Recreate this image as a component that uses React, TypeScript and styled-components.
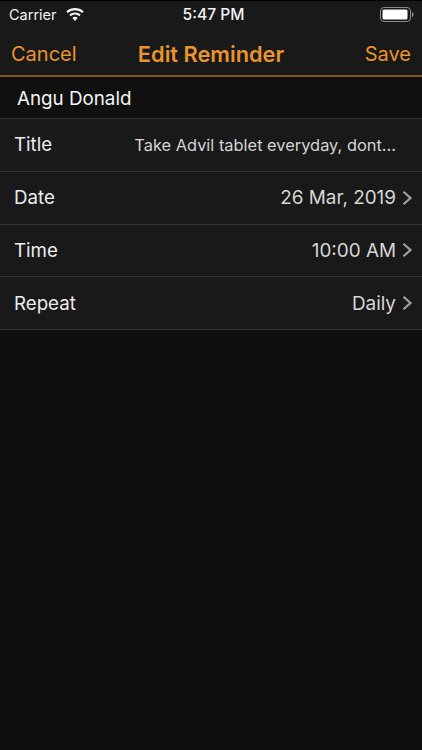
import React from 'react'
import styled, { createGlobalStyle } from 'styled-components'

const GlobalStyle = createGlobalStyle`
    html, body {
        margin: 0;
        padding: 0;
        background: #0f0f0f;
    }
    * {
        box-sizing: border-box;
    }
`

const Screen = styled.div`
    width: 422px;
    height: 750px;
    overflow: hidden;
    background: #0f0f0f;
    font-family: Inter, "Liberation Sans", sans-serif;
    display: flex;
    flex-direction: column;
`

const Header = styled.div`
    background: #191919;
    border-top: 1px solid #000;
    border-bottom: 2px solid #7f5724;
    height: 77px;
    display: flex;
    flex-direction: column;
`

const StatusBar = styled.div`
    height: 27px;
    display: grid;
    grid-template-columns: 1fr auto 1fr;
    align-items: center;
    padding: 0 8px 0 9px;
    color: #f2f2f2;
    font-size: 14.5px;
`

const Carrier = styled.div`
    display: flex;
    align-items: center;
    gap: 9px;
`

const Clock = styled.div`
    font-weight: 500;
    font-size: 15.6px;
    padding-left: 4px;
`

const BatteryWrap = styled.div`
    justify-self: end;
    display: flex;
`

const NavBar = styled.div`
    flex: 1;
    display: grid;
    grid-template-columns: 1fr auto 1fr;
    align-items: center;
    padding: 4px 11px 0 11px;
    color: #e8942f;
    font-size: 20px;
`

const NavTitle = styled.div`
    font-weight: 600;
    font-size: 21.8px;
`

const NavAction = styled.div<{ $right?: boolean }>`
    text-align: ${p => (p.$right ? 'right' : 'left')};
`

const Patient = styled.div`
    height: 41px;
    padding: 2px 0 0 17px;
    display: flex;
    align-items: center;
    color: #f4f4f4;
    font-size: 18.8px;
    background: #101010;
`

const Row = styled.div`
    height: 52.75px;
    display: flex;
    align-items: center;
    justify-content: space-between;
    padding: 0 9px 0 14px;
    background: #191919;
    border-top: 1px solid #333;
`

const List = styled.div`
    border-bottom: 1px solid #333;
`

const Label = styled.div`
    color: #ececec;
    font-size: 18.7px;
`

const Value = styled.div`
    display: flex;
    align-items: center;
    gap: 6px;
    color: #d6d6d6;
    font-size: 18.9px;
`

const TitleValue = styled.div`
    color: #d4d4d4;
    font-size: 16.4px;
    padding-right: 17px;
`

const Chevron = () => (
    <svg width="11" height="16" viewBox="0 0 11 16">
        <path d="M1.500 1.800L8.500 8l-7 6.200" fill="none" stroke="#a0a0a0" strokeWidth="2.200" />
    </svg>
)

const WifiIcon = () => (
    <svg width="18" height="13" viewBox="0 0 18 13">
        <path d="M9 13l-2.600-3.100a4 4 0 0 1 5.200 0z" fill="#f2f2f2" />
        <path d="M3.900 7.400a7.600 7.600 0 0 1 10.200 0" fill="none" stroke="#f2f2f2" strokeWidth="2.100" />
        <path d="M1 4.200a12 12 0 0 1 16 0" fill="none" stroke="#f2f2f2" strokeWidth="2.100" />
    </svg>
)

const BatteryIcon = () => (
    <svg width="34" height="15" viewBox="0 0 34 15">
        <rect x="0.500" y="0.500" width="30" height="14" rx="3.500" fill="none" stroke="#8a8a8a" />
        <rect x="2.500" y="2.500" width="25" height="10" rx="1.500" fill="#fff" />
        <path d="M32 5v5c1-.3 1.600-1.300 1.600-2.500S33 5.300 32 5z" fill="#8a8a8a" />
    </svg>
)

const App: React.FC = () => {
    return (
        <Screen>
            <GlobalStyle />
            <Header>
                <StatusBar>
                    <Carrier>Carrier <WifiIcon /></Carrier>
                    <Clock>5:47 PM</Clock>
                    <BatteryWrap><BatteryIcon /></BatteryWrap>
                </StatusBar>
                <NavBar>
                    <NavAction>Cancel</NavAction>
                    <NavTitle>Edit Reminder</NavTitle>
                    <NavAction $right>Save</NavAction>
                </NavBar>
            </Header>
            <Patient>Angu Donald</Patient>
            <List>
                <Row>
                    <Label>Title</Label>
                    <TitleValue>Take Advil tablet everyday, dont...</TitleValue>
                </Row>
                <Row>
                    <Label>Date</Label>
                    <Value>26 Mar, 2019 <Chevron /></Value>
                </Row>
                <Row>
                    <Label>Time</Label>
                    <Value>10:00 AM <Chevron /></Value>
                </Row>
                <Row>
                    <Label>Repeat</Label>
                    <Value>Daily <Chevron /></Value>
                </Row>
            </List>
        </Screen>
    )
}

export default App
